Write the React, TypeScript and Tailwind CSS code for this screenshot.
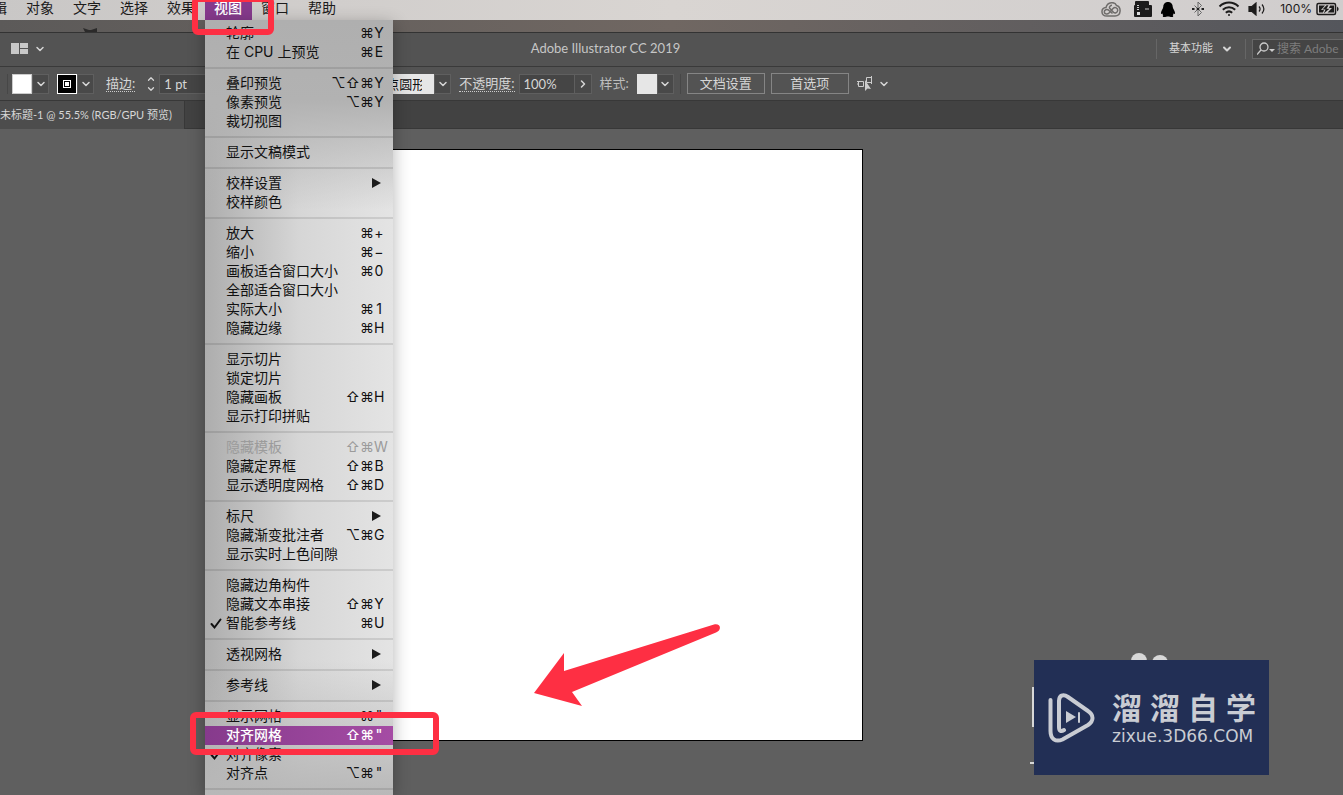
import { FiChevronDown, FiChevronRight, FiChevronUp } from "react-icons/fi";

type Entry = { label: string; keys?: string; sub?: boolean; checked?: boolean; disabled?: boolean; active?: boolean };

const menuGroups: Entry[][] = [
  [
    { label: "轮廓", keys: "⌘Y" },
    { label: "在 CPU 上预览", keys: "⌘E" },
  ],
  [
    { label: "叠印预览", keys: "⌥⇧⌘Y" },
    { label: "像素预览", keys: "⌥⌘Y" },
    { label: "裁切视图" },
  ],
  [{ label: "显示文稿模式" }],
  [{ label: "校样设置", sub: true }, { label: "校样颜色" }],
  [
    { label: "放大", keys: "⌘+" },
    { label: "缩小", keys: "⌘−" },
    { label: "画板适合窗口大小", keys: "⌘0" },
    { label: "全部适合窗口大小" },
    { label: "实际大小", keys: "⌘1" },
    { label: "隐藏边缘", keys: "⌘H" },
  ],
  [
    { label: "显示切片" },
    { label: "锁定切片" },
    { label: "隐藏画板", keys: "⇧⌘H" },
    { label: "显示打印拼贴" },
  ],
  [
    { label: "隐藏模板", keys: "⇧⌘W", disabled: true },
    { label: "隐藏定界框", keys: "⇧⌘B" },
    { label: "显示透明度网格", keys: "⇧⌘D" },
  ],
  [
    { label: "标尺", sub: true },
    { label: "隐藏渐变批注者", keys: "⌥⌘G" },
    { label: "显示实时上色间隙" },
  ],
  [
    { label: "隐藏边角构件" },
    { label: "隐藏文本串接", keys: "⇧⌘Y" },
    { label: "智能参考线", keys: "⌘U", checked: true },
  ],
  [{ label: "透视网格", sub: true }],
  [{ label: "参考线", sub: true }],
  [
    { label: "显示网格", keys: '⌘"' },
    { label: "对齐网格", keys: '⇧⌘"', active: true },
    { label: "对齐像素", checked: true },
    { label: "对齐点", keys: '⌥⌘"' },
  ],
];

function MenuRow({ item }: { item: Entry }) {
  const tone = item.active
    ? "bg-linear-to-r from-[#863a8c] to-[#a54ca4] text-white font-medium"
    : item.disabled
      ? "text-[#9b9b9b]"
      : "text-[#111]";
  return (
    <button disabled={item.disabled} className={`flex h-[19px] w-full items-start pr-[9px] text-left leading-[17px] ${tone}`}>
      <span className="flex h-[19px] w-[21px] items-center justify-center">
        {item.checked && (
          <svg width="12" height="12" viewBox="0 0 12 12" fill="none" stroke="currentColor" strokeWidth="2" strokeLinecap="round">
            <path d="M1.5 6 4.5 9.5 10.5 1.5" />
          </svg>
        )}
      </span>
      <span className="flex-1 whitespace-nowrap">{item.label}</span>
      {item.keys && (
        <span className="flex">
          {item.keys.slice(0, -1)}
          <span className="w-2.5 text-center">{item.keys.slice(-1)}</span>
        </span>
      )}
      {item.sub && (
        <svg className="mt-1" width="13" height="10" viewBox="0 0 13 10" fill="#1c1c1c">
          <path d="M1 0 10 5 1 10z" />
        </svg>
      )}
    </button>
  );
}

function ViewMenu() {
  return (
    <div className="absolute left-0 top-5 z-10 h-[775px] w-[188px] overflow-hidden bg-linear-to-r from-[#adadad] via-[#d6d6d6] to-[#e4e4e4] shadow-[0_4px_16px_rgba(0,0,0,0.3)]">
      <div className="bg-[linear-gradient(to_bottom,#afafaf_0,#b2b2b2_80px,transparent_190px,transparent_640px,#b8b8b8_775px)] pt-1">
        {menuGroups.map((group, i) => (
          <div key={i}>
            {group.map((item) => (
              <MenuRow key={item.label} item={item} />
            ))}
            <div className="flex h-3 items-center">
              <div className="h-0.5 w-full bg-black/10" />
            </div>
          </div>
        ))}
      </div>
    </div>
  );
}

function StatusIcons() {
  return (
    <div className="flex h-[18px] items-center">
      <svg width="20" height="15" viewBox="0 0 20 15" fill="none" stroke="#6f6d6b" strokeWidth="1.5">
        <path d="M6 14C-.5 14-.5 6 5 5.500 6.500-.5 14-.5 15.500 3.500 20.500 5 20.500 14 14 14z" />
        <path d="M11.500 11.500 8 8.500C6 6.500 3 8 3.300 10.200S6.500 12.500 8 11L12 6.500C14 4.500 17 6 16.700 8.500S14 11.500 12.500 10.300L8.500 6C8 5 9.500 3.300 11 3.300" />
      </svg>
      <svg className="ml-3" width="19" height="16" viewBox="0 0 19 16">
        <path d="M3 0h12q1 0 1 1v3h2q1 0 1 1v10q0 1-1 1H2q-1 0-1-1V5q0-1 1-1V1q0-1 1-1z" fill="#1c1b1b" />
        <path d="M4 4.500h2M4 6.500h2M4 8.500h2M12 8h4" stroke="#ccc" />
        <rect x="4" y="11" width="3" height="3" fill="#ddd" />
      </svg>
      <svg className="ml-2" width="16" height="17" viewBox="0 0 16 18">
        <path d="M8 1c3.300 0 5 2.500 5 5 0 2 2.500 4 2.500 7 0 1-1 .8-1.500 0 0 1-.5 1.500-1 2 1 .5.800 2-1 2-1.500 0-2.500-.5-4-.5s-2.500.5-4 .5c-1.800 0-2-1.500-1-2-.5-.5-1-1-1-2-.5.800-1.500 1-1.500 0 0-3 2.500-5 2.500-7 0-2.500 1.700-5 5-5z" />
      </svg>
      <svg className="ml-4" width="12" height="16" viewBox="0 0 12 16" fill="none" stroke="#666">
        <path d="M2.500 4.500 9.500 11.500 6 15V1l3.500 3.500-7 7" />
        <path d="M0 8h2.500M4.700 8h2.600M9.500 8h2.500" stroke="#222" strokeWidth="2.200" />
      </svg>
      <svg className="ml-3.5" width="22" height="16" viewBox="0 0 22 16" fill="none" stroke="#1c1b1b" strokeWidth="2">
        <path d="M1.500 5.500C7 .3 15 .3 20.500 5.500M4.800 8.700c3.600-3.300 8.800-3.300 12.400 0M7.800 11.700c2-1.700 4.400-1.700 6.400 0" />
        <circle cx="11" cy="14" r="1" fill="#1c1b1b" stroke="none" />
      </svg>
      <svg className="ml-2" width="18" height="14" viewBox="0 0 18 14" fill="none" stroke="#1c1b1b" strokeWidth="1.200">
        <path d="M1 4.500h3L8 1v12L4 9.500H1z" fill="#1c1b1b" />
        <path d="M11 4.500c1.300 1.500 1.300 3.500 0 5M14 2.500c2.500 3 2.500 6 0 9" />
      </svg>
      <span className="ml-3.5 text-xs">100%</span>
      <svg className="ml-1" width="23" height="14" viewBox="0 0 23 14">
        <rect x="1" y="1.500" width="18.500" height="11" rx="1.500" fill="none" stroke="#1c1b1b" strokeWidth="1.500" />
        <path d="M3 3.500h6L5 8h3l-1 2.500H3zM10.500 3.200 6.500 7.500h3L7.800 11.500 13.500 6.800h-3L12.500 3.200zM14 3.500h4v7h-6.500L16 6h-3z" fill="#1c1b1b" />
        <path d="M21 4.500v5l1.500-1.500V6z" fill="#1c1b1b" />
      </svg>
    </div>
  );
}

function MenuBar() {
  const tab = "flex h-5 w-[47px] items-start pl-[9px] leading-4";
  return (
    <div className="flex h-5 items-start justify-between bg-linear-to-r from-[#c9c7c6] via-[#d9d5d2] to-[#d0cdcd] pr-1 text-sm text-[#1c1b1b]">
      <nav className="-ml-[7px] flex whitespace-nowrap">
        <button className="flex h-5 w-6 items-start leading-4">辑</button>
        <button className={tab}>对象</button>
        <button className={tab}>文字</button>
        <button className={tab}>选择</button>
        <button className={tab}>效果</button>
        <div className="relative">
          <button className={`${tab} bg-[#863a8c] font-medium text-white`}>视图</button>
          <ViewMenu />
        </div>
        <button className={tab}>窗口</button>
        <button className={tab}>帮助</button>
      </nav>
      <StatusIcons />
    </div>
  );
}

function TitleBar() {
  return (
    <div className="grid h-[34px] grid-cols-[1fr_auto_1fr] items-center border-b border-[#3a3a3a] bg-[#535353] pb-0.5">
      <button className="ml-[11px] flex items-center gap-1.5" aria-label="排列文档">
        <svg width="17" height="11" fill="#c8c8c8">
          <path d="M0 0h8v11H0zM9 0h8v5H9zM9 6h8v5H9z" />
        </svg>
        <FiChevronDown className="size-3" strokeWidth={3} />
      </button>
      <h1 className="-ml-[132px] text-[13px] text-[#c6c6c6]">Adobe Illustrator CC 2019</h1>
      <div className="flex items-center justify-end overflow-hidden">
        <div className="h-5 w-px bg-[#666]" />
        <button className="mx-3 flex items-center gap-2 text-[11px]">
          基本功能 <FiChevronDown className="size-3" strokeWidth={4} />
        </button>
        <div className="h-5 w-px bg-[#666]" />
        <label className="ml-1.5 flex h-5 w-[91px] items-center border border-r-0 border-[#686868] bg-[#444] pl-1">
          <svg className="shrink-0" width="18" height="14" viewBox="0 0 18 14" fill="none" stroke="#ccc" strokeWidth="1.300">
            <circle cx="7" cy="5" r="4" />
            <path d="M4 8 0 12.500" />
            <path d="M12 7h6l-3 3z" fill="#ccc" stroke="none" />
          </svg>
          <input aria-label="搜索" placeholder="搜索 Adobe" className="ml-0.5 w-[66px] bg-transparent text-xs placeholder:text-[#7d7d7d]" />
        </label>
      </div>
    </div>
  );
}

function DropArrow() {
  return (
    <button aria-label="展开" className="flex h-5 w-[17px] items-center justify-center border border-[#5f5f5f] bg-[#494949]">
      <FiChevronDown className="size-3" strokeWidth={3} />
    </button>
  );
}

function ControlBar() {
  return (
    <div className="flex h-[34px] items-center whitespace-nowrap border-b border-[#383838] bg-[#535353] text-[13px]">
      <div className="ml-[7px] h-5 w-px bg-[#474747]" />
      <button aria-label="填色" className="ml-1 size-5 border border-[#ccc] bg-white" />
      <DropArrow />
      <button aria-label="描边颜色" className="ml-2 flex size-5 items-center justify-center border border-white bg-black">
        <span className="flex size-2 items-center justify-center border border-white">
          <span className="size-1 bg-white" />
        </span>
      </button>
      <DropArrow />
      <label htmlFor="stroke" className="ml-3 border-b border-dotted border-[#ccc] leading-4">
        描边:
      </label>
      <div className="ml-2 flex w-4 flex-col items-center">
        <FiChevronUp className="size-2.5" strokeWidth={3} />
        <FiChevronDown className="size-2.5" strokeWidth={3} />
      </div>
      <input id="stroke" defaultValue="1 pt" className="h-5 w-[180px] border border-[#5f5f5f] bg-[#454545] pl-1" />
      <input aria-label="画笔" defaultValue="点圆形" className="ml-[43px] h-5 w-[52px] bg-[#e6e6e6] pl-1 text-right pr-3 text-[#111]" />
      <DropArrow />
      <label htmlFor="opacity" className="ml-2 border-b border-dotted border-[#ccc] leading-4">
        不透明度:
      </label>
      <input id="opacity" defaultValue="100%" className="ml-1 h-5 w-14 border border-[#5f5f5f] bg-[#454545] pl-1" />
      <button aria-label="更多" className="flex h-5 w-[17px] items-center justify-center border border-l-0 border-[#5f5f5f] bg-[#494949]">
        <FiChevronRight className="size-3" strokeWidth={3} />
      </button>
      <span className="ml-2 text-[#bdbdbd]">样式:</span>
      <button aria-label="样式" className="ml-2 size-5 bg-[#e6e6e6]" />
      <DropArrow />
      <div className="ml-1.5 h-5 w-px bg-[#474747]" />
      <button className="ml-1.5 h-[21px] w-[78px] border border-[#858585]">文档设置</button>
      <button className="ml-1.5 h-[21px] w-[78px] border border-[#858585]">首选项</button>
      <button aria-label="对齐选项" className="ml-2 flex items-center gap-1">
        <svg width="17" height="16" viewBox="0 0 17 16" fill="none" stroke="#ccc">
          <path d="M1.500 5.500h5v5h-5zM9.500 1.500h5v5h-5zM0 8h1M14.500 0v8M0 5.500h2" />
          <path d="M8 4v11l2.500-2.500L14 13z" fill="#ccc" stroke="none" />
        </svg>
        <FiChevronDown className="size-3" strokeWidth={3} />
      </button>
    </div>
  );
}

function Watermark() {
  return (
    <div className="absolute right-[74px] top-[660px] flex h-[115px] w-[235px] items-center bg-[#222f55] text-[#c9ccd3]">
      <svg className="ml-3.5" width="48" height="52" viewBox="0 0 48 52" fill="none" stroke="currentColor" strokeWidth="4" strokeLinecap="round">
        <path d="M2.500 8v31c0 8 5 11.500 12 8.500L40 33c6-4 6-10 0-14L20 5c-5-3.500-9-1.500-9 4v26c0 4 2 5 5 3" />
        <path d="M18 19v12l10-6z" fill="currentColor" stroke="none" />
        <path d="M31 21v9" strokeWidth="2" />
      </svg>
      <div className="ml-4">
        <div className="flex gap-2 text-[30px] font-bold leading-9">
          <span>溜</span>
          <span>溜</span>
          <span>自</span>
          <span>学</span>
        </div>
        <div className="font-[DejaVu_Sans,sans-serif] text-[17px] leading-5">zixue.3D66.COM</div>
      </div>
    </div>
  );
}

export default function App() {
  return (
    <div className="relative flex h-screen flex-col overflow-hidden bg-[#5f5f5f] font-[Inter,'Noto_Sans_CJK_SC',sans-serif] text-[#d6d6d6]">
      <MenuBar />
      <div className="flex h-3 items-end bg-linear-to-r from-[#5c5a59] via-[#706762] to-[#54565c]">
        <svg className="ml-[83px]" width="14" height="4" fill="#2b2a2a">
          <path d="M0 0 6 2h2l6-2v4H2z" />
        </svg>
      </div>
      <div className="border-t border-[#333] font-[Lato,'Noto_Sans_CJK_SC',sans-serif]">
        <TitleBar />
        <ControlBar />
        <div className="flex h-7 border-b border-[#383838] bg-[#424242]">
          <button className="h-7 w-[185px] border-r border-[#383838] bg-[#4d4d4d] text-left text-[11px] whitespace-nowrap">
            未标题-1 @ 55.5% (RGB/GPU 预览)
          </button>
        </div>
      </div>
      <main className="flex-1 pt-5">
        <div className="ml-[272px] h-[592px] w-[591px] border border-black bg-white" />
      </main>

      <div className="absolute left-48 -top-1 z-20 h-[39px] w-[82px] rounded-md border-[6px] border-[#fe2f43]" />
      <div className="absolute left-[190px] top-[712px] z-20 h-[43px] w-[249px] rounded-md border-[6px] border-[#fe2f43]" />
      <svg className="absolute left-[534px] top-[623px]" width="187" height="84" viewBox="0 0 187 84" fill="#fe2f43">
        <path d="M0 70 30 30V48L180 1.500C187 0 188 7 182 9.500L38 69 48 83z" />
      </svg>
      <svg className="absolute right-[172px] top-[652px]" width="42" height="9" fill="#d8d8d8">
        <circle cx="10" cy="9" r="8" />
        <circle cx="31" cy="11" r="8" />
      </svg>
      <div className="absolute right-[309px] top-[687px] h-10 w-0.5 bg-[#d8d8d8]" />
      <div className="absolute right-[309px] top-[762px] h-0.5 w-1 bg-[#d8d8d8]" />
      <Watermark />
    </div>
  );
}
